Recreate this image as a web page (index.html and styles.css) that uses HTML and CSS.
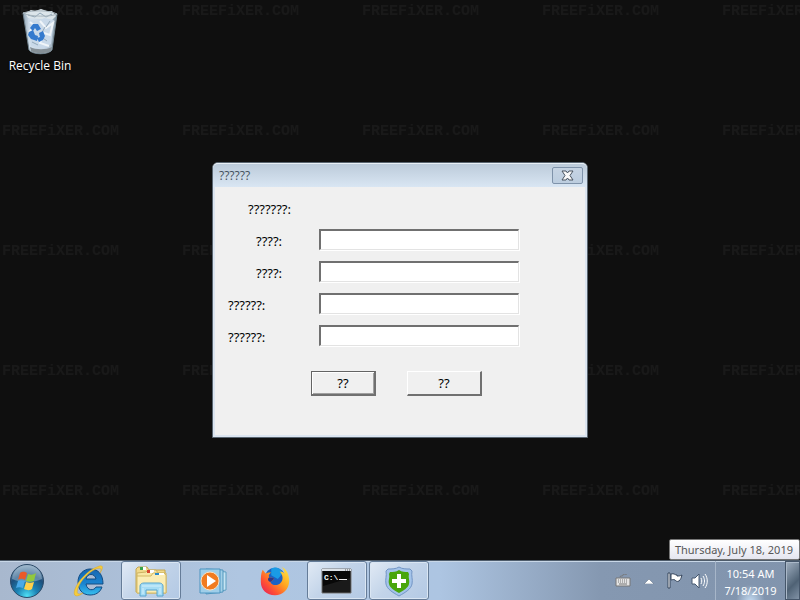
FILE: index.html
```html
<!DOCTYPE html>
<html lang="en">
<head>
    <meta charset="UTF-8">
    <meta name="viewport" content="width=device-width, initial-scale=1.0">
    <title>Desktop</title>
    <link rel="stylesheet" href="styles.css">
</head>
<body>
    <main class="desktop">
        <svg class="wallpaper" aria-hidden="true">
            <defs>
                <pattern id="mark" width="180" height="120" patternUnits="userSpaceOnUse">
                    <text class="mark" x="2" y="15">FREEFiXER.COM</text>
                </pattern>
            </defs>
            <rect width="100%" height="100%" fill="url(#mark)"/>
        </svg>

        <a class="shortcut" href="#">
            <svg width="40" height="48" viewBox="0 0 40 48">
                <defs>
                    <linearGradient id="bin" x1="0" x2="1" y1="0" y2="0">
                        <stop offset="0" stop-color="#8fa3b3"/>
                        <stop offset="0.2" stop-color="#d3e0ec"/>
                        <stop offset="0.7" stop-color="#c3d3e2"/>
                        <stop offset="1" stop-color="#80939f"/>
                    </linearGradient>
                </defs>
                <path d="M3 5l34 1-5 36c-4 5-19 5-23 0z" fill="url(#bin)" stroke="#70828d"/>
                <path d="M5 5l6-3 4 1 6-2 6 2 5 0 4 5-4 4-24-2z" fill="#dce5ea"/>
                <path d="M8 11l10 3 6-4 10 2-3 24-7 4-13-2z" fill="#c9d9e9"/>
                <path d="M20 13l6 7 7-5-3 12-6-2-4 10 9 3M10 14l5 4-6 6" fill="none" stroke="#f0f5f9" stroke-width="2"/>
                <path d="M25 19l-5 9 7 5M30 13l-4 6M12 34l6 3M8 7l7 2 5-4 6 4 6-3" fill="none" stroke="#93a8b8"/>
                <path d="M3 5c9-3 27-3 34 1-5 3-28 3-34-1z" fill="none" stroke="#a8b5bd"/>
                <path d="M10 39c6 3 16 3 22 0l-1 4c-5 3-16 3-20 0z" fill="#858f96"/>
                <path d="M10 20l3-4 5 0 3 5-4 2-2-3-2 3zM9 24l4-2 2 5 3 1-1 5-6-2-3-4zM19 25l4-2 2 5-2 4-4 2-2-4 3-1z" fill="#347ace"/>
            </svg>
            <span>Recycle Bin</span>
        </a>

        <section class="dialog" role="dialog" aria-labelledby="dialog-title">
            <header class="titlebar">
                <h1 id="dialog-title">??????</h1>
                <button class="close" type="button" aria-label="Close">
                    <svg width="13" height="11" viewBox="0 0 13 11">
                        <path d="M1 1h4l1.500 2L8 1h4L9 5.500 12 10H8L6.500 8 5 10H1l3-4.500z" fill="#f8f8f8" stroke="#4a5561"/>
                    </svg>
                </button>
            </header>
            <form class="form">
                <p class="row heading">???????:</p>
                <div class="row short">
                    <label for="field1">????:</label>
                    <input id="field1" type="text">
                </div>
                <div class="row short">
                    <label for="field2">????:</label>
                    <input id="field2" type="text">
                </div>
                <div class="row">
                    <label for="field3">??????:</label>
                    <input id="field3" type="text">
                </div>
                <div class="row">
                    <label for="field4">??????:</label>
                    <input id="field4" type="text">
                </div>
                <div class="actions">
                    <button class="default" type="button">??</button>
                    <button type="button">??</button>
                </div>
            </form>
        </section>

        <div class="tooltip" role="tooltip">Thursday, July 18, 2019</div>
    </main>

    <footer class="taskbar">
        <button class="start" type="button" aria-label="Start">
            <svg width="36" height="36" viewBox="0 0 36 36">
                <defs>
                    <radialGradient id="orb" cx="0.5" cy="0.95" r="0.9">
                        <stop offset="0" stop-color="#4fe0f5"/>
                        <stop offset="0.35" stop-color="#1b83b5"/>
                        <stop offset="0.7" stop-color="#1d4f7c"/>
                        <stop offset="1" stop-color="#7d9bb5"/>
                    </radialGradient>
                </defs>
                <circle cx="18" cy="18" r="16.500" fill="url(#orb)" stroke="#2c4a68"/>
                <path d="M3 16C4 6 12 2 18 2s14 4 15 14c-8 4-22 4-30 0z" fill="#c5d9e8" opacity="0.4"/>
                <path d="M11 10c3-2 5-1 7 0l-2 7c-2-1-4-2-7 0z" fill="#e95a28"/>
                <path d="M19 11c3 1 5 1 8-1l-2 8c-3 1-5 1-8 0z" fill="#91c83e"/>
                <path d="M9 18c2-1 4-1 7 0l-2 7c-3-1-5-1-7 0z" fill="#49a9e8"/>
                <path d="M17 19c3 1 5 1 8 0l-2 7c-3 2-5 1-8 0z" fill="#ffd04a"/>
            </svg>
        </button>
        <nav class="tasks">
            <button class="task" type="button" aria-label="Internet Explorer">
                <svg width="34" height="34" viewBox="0 0 34 34">
                    <defs>
                        <linearGradient id="ie" x1="0" x2="0" y1="0" y2="1">
                            <stop offset="0" stop-color="#1766b0"/>
                            <stop offset="0.55" stop-color="#1a83cf"/>
                            <stop offset="1" stop-color="#38bfee"/>
                        </linearGradient>
                    </defs>
                    <path d="M31 20H14c1 7 8 7 10 3h6c-2 6-7 8-12 8-8 0-12-6-12-13C6 10 12 5 18 5c9 0 13 6 13 15zM14 15h10c-1-6-9-6-10 0z" fill="url(#ie)" stroke="#134c83"/>
                    <path d="M28 9c4-6 3-9-3-6C16 6 6 17 3 25c-3 9 3 8 8 4-5 2-7 1-5-5C9 16 17 8 24 5c5-2 6 0 4 4z" fill="#f6cd3c" stroke="#d7a72d" stroke-width="0.500"/>
                </svg>
            </button>
            <button class="task open" type="button" aria-label="Windows Explorer">
                <svg width="34" height="34" viewBox="0 0 34 34">
                    <path d="M2 5l2-2h9l2 3h16v22H2z" fill="#f0d98a" stroke="#c3a653"/>
                    <path d="M6 3h6v3H6z" fill="#fff"/><path d="M6 3h3v3H6z" fill="#38a54a"/>
                    <path d="M3 9l9-1 2-2h8l2 3h8v20H3z" fill="#f8e7a5" stroke="#cdb262"/>
                    <path d="M13 6h7v3h-7z" fill="#fff"/><path d="M13 6h3v3h-3z" fill="#d8432d"/>
                    <path d="M3 12h14l2-3h11l2 2v18H3z" fill="#fbedb5" stroke="#d3b965"/>
                    <path d="M21 9h9v2h-9z" fill="#fff"/><path d="M21 9h4v2h-4z" fill="#2c8bc9"/>
                    <path d="M6 22c0-2 2-3 4-3h15c2 0 4 1 4 3v10h-6v-6H12v6H6z" fill="#a5dcf4" stroke="#57a4ce"/>
                    <path d="M8 22h19M9 24v6M26 24v6" stroke="#d3f0fc" stroke-width="1"/>
                </svg>
            </button>
            <button class="task" type="button" aria-label="Windows Media Player">
                <svg width="34" height="34" viewBox="0 0 34 34">
                    <path d="M13 6l17 2v18l-17 3z" fill="#c5e4f3" stroke="#5c9fc1"/>
                    <path d="M10 5l17 1v22l-17 2z" fill="#a2d0e8" stroke="#5396bd"/>
                    <path d="M4 5h20v24H4z" fill="#9fcee9" stroke="#4c95c1"/>
                    <circle cx="14" cy="17" r="9" fill="#f17b20" stroke="#fde0bd"/>
                    <path d="M11 11l9 6-9 6z" fill="#fff"/>
                </svg>
            </button>
            <button class="task" type="button" aria-label="Firefox">
                <svg width="34" height="34" viewBox="0 0 36 34">
                    <defs>
                        <linearGradient id="fox" x1="1" x2="0" y1="0" y2="1">
                            <stop offset="0" stop-color="#fff04c"/>
                            <stop offset="0.4" stop-color="#ffa61f"/>
                            <stop offset="0.7" stop-color="#ff5034"/>
                            <stop offset="1" stop-color="#df1560"/>
                        </linearGradient>
                    </defs>
                    <circle cx="18" cy="14" r="11" fill="#1c62c4"/>
                    <path d="M14 4c5-3 11 0 12 5l-5 6-7-4z" fill="#1a9be5"/>
                    <path d="M5 5l3 4c2-1 4-1 6-1-3 2-3 4-2 5l5 1c0 2-3 3-4 4 2 4 7 4 10 2 5-4 3-10 0-13 3 0 4 1 5 2 0-3-1-5-3-7 6 3 8 9 8 15 0 9-7 15-15 15C9 32 3 26 3 18c0-5 0-9 2-13z" fill="url(#fox)"/>
                    <path d="M12 13l5 1c0 2-3 3-4 4-3-1-3-4-1-5z" fill="#303889"/>
                </svg>
            </button>
            <button class="task open" type="button" aria-label="Command Prompt">
                <svg width="34" height="34" viewBox="0 0 34 34">
                    <path d="M2 5h29v24H2z" fill="#080808" stroke="#777"/>
                    <path d="M2 5h29v2H2z" fill="#dce1e6"/>
                    <path d="M25 6h1m1 0h1m1 0h1" stroke="#555"/>
                    <path d="M3 22L30 14v14H3z" fill="#2b2b2b" opacity="0.5"/>
                    <text class="prompt" x="4" y="16">C:\</text>
                    <path d="M19 15.500h8" stroke="#eee" stroke-width="1"/>
                </svg>
            </button>
            <button class="task open" type="button" aria-label="Security">
                <svg width="34" height="34" viewBox="0 0 34 34">
                    <path d="M17 3c3 2 7 2 11 2l2 2c-1 5 1 8 0 13-1 5-6 8-13 12C10 28 5 25 4 20 3 15 5 12 4 7l2-2c4 0 8 0 11-2z" fill="#a4c4ea" stroke="#7295c5"/>
                    <path d="M17 6c3 2 6 2 9 2l1 2c-1 4 1 6 0 10-1 4-5 6-10 9-5-3-9-5-10-9-1-4 1-6 0-10l1-2c3 0 6 0 9-2z" fill="#49a60c"/>
                    <path d="M17 10v14M10 17h14" stroke="#fff" stroke-width="4"/>
                </svg>
            </button>
        </nav>
        <div class="tray">
            <svg width="16" height="13" viewBox="0 0 16 13">
                <path d="M1 4h14v8H1z" fill="#e4e4e4" stroke="#777"/>
                <path d="M3 6h10M3 8h10" stroke="#777" stroke-dasharray="1 1"/>
                <path d="M4 10h8" stroke="#777"/><path d="M5 3c0-2 3 0 3-2s3 0 4-1" fill="none" stroke="#777"/>
            </svg>
            <svg class="chevron" width="10" height="6" viewBox="0 0 10 6">
                <path d="M0 6l5-5 5 5z" fill="#fff" stroke="#53657d" stroke-width="0.500"/>
            </svg>
            <svg width="16" height="17" viewBox="0 0 16 17">
                <path d="M1 1h2v15H1z" fill="#fff" stroke="#34445a"/>
                <path d="M4 2c3-1 4 1 6 1v1c2 0 3 0 5-1-1 3-1 4-3 6-2 1-3 0-4-1-2-1-3 0-4 0z" fill="#fff" stroke="#34445a"/>
            </svg>
            <svg width="17" height="16" viewBox="0 0 17 16">
                <path d="M1 5h3l4-4v14l-4-4H1z" fill="#fff" stroke="#465970"/>
                <path d="M10 5c1 2 1 4 0 6M12 3c2 3 2 7 0 10M14 1c3 4 3 10 0 14" fill="none" stroke="#fff"/>
            </svg>
        </div>
        <time class="clock" datetime="2019-07-18T10:54">10:54 AM<br>7/18/2019</time>
        <button class="show-desktop" type="button" aria-label="Show desktop"></button>
    </footer>
</body>
</html>
```
FILE: styles.css
```css
* {
    box-sizing: border-box;
}

html, body {
    height: 100%;
    margin: 0;
}

body {
    display: flex;
    flex-direction: column;
    background-color: #0f0f0f;
    font-family: "Noto Sans", "Open Sans", sans-serif;
    font-size: 12px;
    overflow: hidden;
}

button {
    padding: 0;
    font: inherit;
}

.desktop {
    flex: 1;
    min-height: 0;
}

/* Wallpaper */
.wallpaper {
    position: absolute;
    top: 0;
    left: 0;
    width: 100%;
    height: 100%;
    z-index: -1;
}

.mark {
    font: bold 15px "Liberation Mono", monospace;
    fill: #191919;
}

.shortcut {
    display: flex;
    flex-direction: column;
    align-items: center;
    width: 80px;
    padding-top: 8px;
    color: white;
    font-family: "Open Sans", sans-serif;
    line-height: 20px;
    text-decoration: none;
    text-shadow: 0 1px 2px black;
}

/* Dialog */
.dialog {
    position: absolute;
    top: 50%;
    left: 50%;
    transform: translate(-50%, -50%);
    width: 376px;
    background-color: #f0f0f0;
    border: 1px solid #596570;
    border-radius: 6px 6px 0 0;
    box-shadow: inset 0 0 0 2px #dce5f0;
}

.titlebar {
    display: flex;
    justify-content: space-between;
    height: 24px;
    padding: 3px 4px 0 6px;
    background: linear-gradient(#bccbda, #d9e6f3);
    border-top: 1px solid #e9f0f6;
    border-radius: 5px 5px 0 0;
}

.titlebar h1 {
    margin: 0;
    color: #44505c;
    font-family: "Open Sans", sans-serif;
    font-size: 12px;
    font-weight: normal;
    line-height: 18px;
}

.close {
    display: flex;
    align-items: center;
    justify-content: center;
    width: 31px;
    height: 17px;
    background: linear-gradient(#c6d4e3, #bccddf);
    border: 1px solid #7f93aa;
    border-radius: 2px;
}

.form {
    display: flex;
    flex-direction: column;
    gap: 11px;
    padding: 10px 14px 41px 15px;
    font-size: 13px;
}

.row {
    display: flex;
    height: 21px;
    margin: 0;
    line-height: 25px;
}

.row label {
    width: 91px;
}

.short label {
    padding-left: 28px;
}

.heading {
    padding-left: 20px;
}

.row input {
    width: 200px;
    height: 21px;
    background-color: white;
    border: 1px solid #e3e3e3;
    border-top: 2px solid #707070;
    border-left: 2px solid #707070;
    box-shadow: 1px 1px white;
    outline: none;
}

.actions {
    display: flex;
    gap: 31px;
    margin-top: 14px;
    padding-left: 83px;
}

.actions button {
    width: 75px;
    height: 25px;
    background-color: #f0f0f0;
    border: 1px solid white;
    border-right: 2px solid #707070;
    border-bottom: 2px solid #707070;
}

.actions .default {
    width: 65px;
    border-top-color: #646464;
    border-left-color: #646464;
    box-shadow: inset 1px 1px white, inset -1px -1px #a0a0a0;
}

.tooltip {
    position: absolute;
    right: 0;
    bottom: 40px;
    padding: 0 6px 0 5px;
    background: linear-gradient(white, #e5e6f0);
    border: 1px solid #767676;
    border-radius: 2px;
    color: #575757;
    font-size: 11px;
    line-height: 19px;
}

/* Taskbar */
.taskbar {
    display: flex;
    align-items: stretch;
    height: 40px;
    background: linear-gradient(to right, #a8b8ce, #afc6e1 30%, #adc5e2 55%, #8598b1 75%, #8194ad);
    border-top: 1px solid #4e5c6b;
    box-shadow: inset 0 1px #c8d7e7;
}

.start,
.task {
    display: flex;
    align-items: center;
    justify-content: center;
    background: none;
    border: 1px solid transparent;
}

.start {
    width: 54px;
    margin-right: 5px;
}

.tasks {
    display: flex;
    gap: 2px;
}

.task {
    width: 60px;
    border-radius: 3px;
}

.open {
    background: linear-gradient(135deg, #e1eaf5, #c3d4e9 45%, #b3c9e4);
    border-color: #657c98;
    box-shadow: inset 0 0 0 1px #dae6f3;
}

.prompt {
    font: bold 8px "Liberation Mono", monospace;
    fill: white;
}

.tray {
    display: flex;
    align-items: center;
    gap: 8px;
    margin-left: auto;
    padding-right: 7px;
}

.chevron {
    margin: 0 5px;
}

.clock {
    width: 70px;
    padding-top: 4px;
    background: radial-gradient(ellipse at 50% 105%, #c5dcf2, transparent 30%);
    border-left: 1px solid #a7b6c9;
    color: white;
    font-size: 11px;
    line-height: 17px;
    text-align: center;
}

.show-desktop {
    width: 15px;
    background: linear-gradient(135deg, #a1b0c1, #4f6275 60%, #8192a6);
    border: 1px solid #45566a;
    box-shadow: inset 1px 1px #aab8c8;
}
```
